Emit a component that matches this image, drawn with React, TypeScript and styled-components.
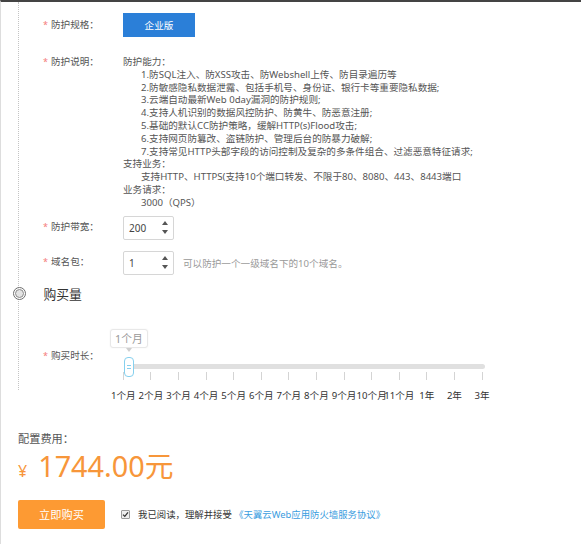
import React from "react";
import styled, { createGlobalStyle } from "styled-components";

const GlobalStyle = createGlobalStyle`
  html, body {
    margin: 0;
    padding: 0;
    background: #ffffff;
  }
  body {
    font-family: "Noto Sans", "Noto Sans CJK SC", sans-serif;
    color: #555555;
  }
  * {
    box-sizing: border-box;
  }
`;

const Page = styled.div`
  width: 581px;
  height: 544px;
  border-top: 2px solid #444444;
  border-left: 1px solid #dddddd;
  overflow: hidden;
`;

const Timeline = styled.div`
  margin-left: 17px;
  padding-top: 11px;
  border-left: 1px dotted #c4c4c4;
  display: flex;
  flex-direction: column;
`;

const FormRow = styled.div<{ $top?: number; $align?: string }>`
  display: flex;
  align-items: ${(p) => p.$align || "center"};
  padding-left: 21px;
  margin-top: ${(p) => p.$top || 0}px;
`;

const Label = styled.div<{ $offset?: number }>`
  width: 83px;
  flex-shrink: 0;
  display: flex;
  font-size: 9.6px;
  line-height: 12.8px;
  color: #555555;
  margin-top: ${(p) => p.$offset || 0}px;
`;

const Star = styled.span`
  width: 11px;
  padding-left: 3px;
  color: #f47a7a;
  font-size: 9px;
`;

const EditionButton = styled.div`
  width: 72px;
  height: 24px;
  background: #2b7fd8;
  color: #ffffff;
  font-size: 9.6px;
  display: flex;
  align-items: center;
  justify-content: center;
`;

const Description = styled.div`
  font-size: 9.6px;
  line-height: 12.8px;
  color: #555555;
  white-space: nowrap;
`;

const Line = styled.div<{ $indent?: boolean }>`
  padding-left: ${(p) => (p.$indent ? 18 : 0)}px;
`;

const NumberBox = styled.div`
  width: 51px;
  height: 24px;
  border: 1px solid #d6d6d6;
  border-radius: 2px;
  display: flex;
  align-items: center;
  justify-content: space-between;
  padding: 0 5px 0 5px;
  font-size: 10px;
  color: #444444;
`;

const Spinner = styled.div`
  display: flex;
  flex-direction: column;
  gap: 5px;
`;

const Arrow = styled.span<{ $down?: boolean }>`
  width: 0;
  height: 0;
  border-left: 3.5px solid transparent;
  border-right: 3.5px solid transparent;
  ${(p) =>
    p.$down
      ? "border-top: 4px solid #555555;"
      : "border-bottom: 4px solid #555555;"}
`;

const Hint = styled.span`
  margin-left: 9px;
  font-size: 9.6px;
  color: #999999;
`;

const SectionHeader = styled.div`
  display: flex;
  align-items: center;
  height: 18px;
  margin-top: 10px;
  margin-left: -6.5px;
`;

const Dot = styled.span`
  width: 13px;
  height: 13px;
  border-radius: 50%;
  border: 1.5px solid #6e6e6e;
  background: #ffffff;
  display: flex;
  align-items: center;
  justify-content: center;

  &::after {
    content: "";
    width: 7px;
    height: 7px;
    border-radius: 50%;
    border: 1.5px solid #8a8a8a;
    background: #e4e4e4;
  }
`;

const SectionTitle = styled.span`
  margin-left: 18px;
  font-size: 12.8px;
  color: #333333;
`;

const Slider = styled.div`
  display: flex;
  flex-direction: column;
  width: 362px;
  margin-bottom: -12px;
`;

const Tooltip = styled.div`
  position: relative;
  width: 38px;
  height: 19px;
  margin-left: -13px;
  margin-bottom: 9px;
  border: 1px solid #e8e8e8;
  border-radius: 3px;
  background: #ffffff;
  box-shadow: 0 0 2px rgba(0, 0, 0, 0.06);
  color: #999999;
  font-size: 10.8px;
  display: flex;
  align-items: center;
  justify-content: center;

  &::after {
    content: "";
    position: absolute;
    left: 15px;
    bottom: -5px;
    border-left: 3.5px solid transparent;
    border-right: 3.5px solid transparent;
    border-top: 4px solid #cfcfcf;
  }
`;

const Rail = styled.div`
  position: relative;
  height: 15px;
`;

const Track = styled.div`
  margin: 7px 0 0 1px;
  width: 361px;
  height: 5px;
  border-radius: 3px;
  background: #e0e0e0;
`;

const Thumb = styled.div`
  position: absolute;
  left: 1px;
  top: 0;
  width: 10px;
  height: 20px;
  border: 1.5px solid #86d0ee;
  border-radius: 4px;
  background: #ffffff;
  display: flex;
  flex-direction: column;
  align-items: center;
  justify-content: center;
  gap: 2px;

  &::before,
  &::after {
    content: "";
    width: 4px;
    height: 1px;
    background: #86d0ee;
  }
`;

const Scale = styled.div`
  display: grid;
  grid-template-columns: repeat(14, 27.6px);
  margin-left: -13.5px;
`;

const Step = styled.div`
  display: flex;
  flex-direction: column;
  align-items: center;
`;

const Tick = styled.span`
  width: 1px;
  height: 8px;
  background: #d4d4d4;
`;

const StepLabel = styled.span`
  margin-top: 10px;
  font-size: 9.6px;
  line-height: 12px;
  color: #333333;
  white-space: nowrap;
`;

const Summary = styled.div`
  padding: 42px 0 0 17px;
  display: flex;
  flex-direction: column;
`;

const CostLabel = styled.div`
  font-size: 11.2px;
  line-height: 14px;
  color: #555555;
`;

const Price = styled.div`
  margin-top: 3px;
  height: 34px;
  display: flex;
  align-items: baseline;
  color: #f7963a;
  line-height: 34px;
`;

const Yen = styled.span`
  font-size: 16px;
  margin-right: 11px;
`;

const Amount = styled.span`
  font-size: 28.8px;
`;

const Actions = styled.div`
  margin-top: 17px;
  display: flex;
  align-items: center;
`;

const BuyButton = styled.div`
  width: 87px;
  height: 29px;
  border-radius: 2px;
  background: #fd9a33;
  color: #ffffff;
  font-size: 11.2px;
  display: flex;
  align-items: center;
  justify-content: center;
`;

const Check = styled.span`
  margin-left: 16px;
  width: 9px;
  height: 9px;
  border: 1px solid #9a9a9a;
  border-radius: 1px;
  background: #eeeeee;
  display: flex;
  align-items: center;
  justify-content: center;
`;

const Agree = styled.span`
  margin-left: 8px;
  font-size: 9.4px;
  color: #333333;
  white-space: nowrap;
`;

const Link = styled.span`
  color: #3a9de0;
`;

const descLines: { text: string; indent?: boolean }[] = [
  { text: "防护能力：" },
  { text: "1.防SQL注入、防XSS攻击、防Webshell上传、防目录遍历等", indent: true },
  { text: "2.防敏感隐私数据泄露、包括手机号、身份证、银行卡等重要隐私数据;", indent: true },
  { text: "3.云端自动最新Web 0day漏洞的防护规则;", indent: true },
  { text: "4.支持人机识别的数据风控防护、防黄牛、防恶意注册;", indent: true },
  { text: "5.基础的默认CC防护策略，缓解HTTP(s)Flood攻击;", indent: true },
  { text: "6.支持网页防篡改、盗链防护、管理后台的防暴力破解;", indent: true },
  { text: "7.支持常见HTTP头部字段的访问控制及复杂的多条件组合、过滤恶意特征请求;", indent: true },
  { text: "支持业务：" },
  { text: "支持HTTP、HTTPS(支持10个端口转发、不限于80、8080、443、8443端口", indent: true },
  { text: "业务请求：" },
  { text: "3000（QPS）", indent: true },
];

const steps = [
  "1个月", "2个月", "3个月", "4个月", "5个月", "6个月", "7个月",
  "8个月", "9个月", "10个月", "11个月", "1年", "2年", "3年",
];

const NumberField: React.FC<{ value: string }> = ({ value }) => (
  <NumberBox>
    <span>{value}</span>
    <Spinner>
      <Arrow />
      <Arrow $down />
    </Spinner>
  </NumberBox>
);

const App: React.FC = () => {
  return (
    <Page>
      <GlobalStyle />
      <Timeline>
        <FormRow>
          <Label>
            <Star>*</Star>防护规格：
          </Label>
          <EditionButton>企业版</EditionButton>
        </FormRow>

        <FormRow $top={19} $align="flex-start">
          <Label>
            <Star>*</Star>防护说明：
          </Label>
          <Description>
            {descLines.map((l, i) => (
              <Line key={i} $indent={l.indent}>
                {l.text}
              </Line>
            ))}
          </Description>
        </FormRow>

        <FormRow $top={6}>
          <Label>
            <Star>*</Star>防护带宽：
          </Label>
          <NumberField value="200" />
        </FormRow>

        <FormRow $top={11}>
          <Label>
            <Star>*</Star>域名包：
          </Label>
          <NumberField value="1" />
          <Hint>可以防护一个一级域名下的10个域名。</Hint>
        </FormRow>

        <SectionHeader>
          <Dot />
          <SectionTitle>购买量</SectionTitle>
        </SectionHeader>

        <FormRow $top={26} $align="flex-start">
          <Label $offset={21}>
            <Star>*</Star>购买时长：
          </Label>
          <Slider>
            <Tooltip>1个月</Tooltip>
            <Rail>
              <Track />
              <Thumb />
            </Rail>
            <Scale>
              {steps.map((s) => (
                <Step key={s}>
                  <Tick />
                  <StepLabel>{s}</StepLabel>
                </Step>
              ))}
            </Scale>
          </Slider>
        </FormRow>
      </Timeline>

      <Summary>
        <CostLabel>配置费用：</CostLabel>
        <Price>
          <Yen>¥</Yen>
          <Amount>1744.00元</Amount>
        </Price>
        <Actions>
          <BuyButton>立即购买</BuyButton>
          <Check>
            <svg width="7" height="7" viewBox="0 0 7 7">
              <path d="M1 3.6 L2.8 5.4 L6 1.4" fill="none" stroke="#333" strokeWidth="1.3" />
            </svg>
          </Check>
          <Agree>
            我已阅读，理解并接受 <Link>《天翼云Web应用防火墙服务协议》</Link>
          </Agree>
        </Actions>
      </Summary>
    </Page>
  );
};

export default App;
